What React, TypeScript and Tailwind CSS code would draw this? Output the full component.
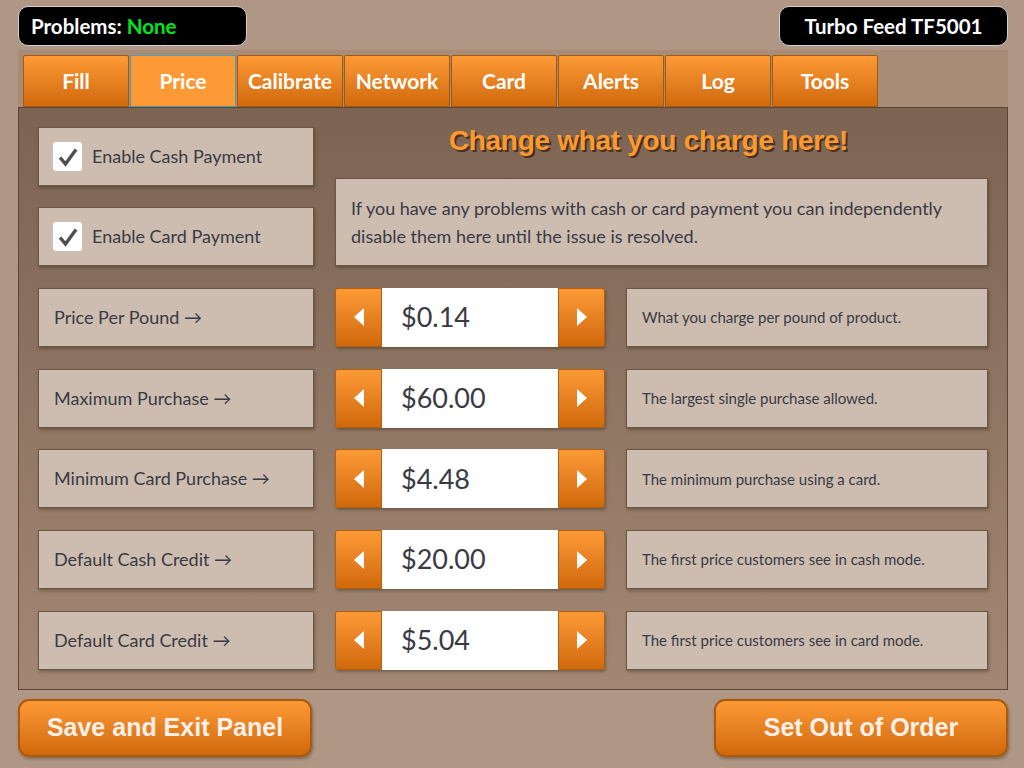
import { useState } from "react";

const tabs = ["Fill", "Price", "Calibrate", "Network", "Card", "Alerts", "Log", "Tools"];

const priceRows = [
  { label: "Price Per Pound", value: 0.14, step: 0.01, note: "What you charge per pound of product." },
  { label: "Maximum Purchase", value: 60, step: 1, note: "The largest single purchase allowed." },
  { label: "Minimum Card Purchase", value: 4.48, step: 0.01, note: "The minimum purchase using a card." },
  { label: "Default Cash Credit", value: 20, step: 1, note: "The first price customers see in cash mode." },
  { label: "Default Card Credit", value: 5.04, step: 0.01, note: "The first price customers see in card mode." },
];

const boxCls =
  "bg-[#cdbdb1] border border-[#6b5545] shadow-[1px_2px_3px_rgba(40,25,15,0.35)]";

function CheckBox({ label }: { label: string }) {
  const [on, setOn] = useState(true);
  return (
    <button
      onClick={() => setOn(!on)}
      className={`${boxCls} h-[59px] w-full flex items-center pl-[14px] gap-[10px] text-left`}
    >
      <span className="w-[29px] h-[29px] bg-white rounded-[3px] flex items-center justify-center">
        {on && (
          <svg width="22" height="22" viewBox="0 0 22 22">
            <path d="M3 11.5 L8.5 18 L19 3.5" fill="none" stroke="#505050" strokeWidth="3.4" strokeLinejoin="miter" />
          </svg>
        )}
      </span>
      <span className="text-[18px] text-[#3a3a44]">{label}</span>
    </button>
  );
}

function Stepper({ initial, step }: { initial: number; step: number }) {
  const [val, setVal] = useState(initial);
  const btn =
    "w-[47px] h-full flex items-center justify-center bg-gradient-to-b from-[#fd9a35] to-[#d06909] border border-[#b0600f]";
  return (
    <div className="flex h-[59px] w-[270px] shadow-[1px_2px_3px_rgba(40,25,15,0.35)] rounded-[3px]">
      <button onClick={() => setVal(Math.max(0, val - step))} className={`${btn} rounded-l-[3px]`}>
        <svg width="10" height="18" viewBox="0 0 10 18">
          <path d="M10 0 L0 9 L10 18 Z" fill="white" />
        </svg>
      </button>
      <div className="flex-1 bg-white flex items-center pl-[19px] text-[27px] text-[#3a3a44]">
        ${val.toFixed(2)}
      </div>
      <button onClick={() => setVal(val + step)} className={`${btn} rounded-r-[3px]`}>
        <svg width="10" height="18" viewBox="0 0 10 18">
          <path d="M0 0 L10 9 L0 18 Z" fill="white" />
        </svg>
      </button>
    </div>
  );
}

export default function App() {
  const [active, setActive] = useState("Price");

  return (
    <div className="w-[1024px] h-[768px] bg-[#b09684] font-['Lato','Open_Sans',sans-serif] flex flex-col pl-[18px] pr-[16px] pt-[6px] overflow-hidden">
      {/* Header badges */}
      <div className="flex justify-between h-[40px]">
        <div className="w-[229px] h-full bg-black rounded-[10px] border border-[#d0d0d0] flex items-center pl-[12px] text-[20.5px] font-bold text-white">
          Problems:&nbsp;<span className="text-[#00e61e]">None</span>
        </div>
        <div className="w-[229px] h-full bg-black rounded-[10px] border border-[#d0d0d0] flex items-center justify-center text-[20.5px] font-bold text-white">
          Turbo Feed TF5001
        </div>
      </div>

      {/* Tab control */}
      <div className="mt-[4px] bg-gradient-to-b from-[#a88c77] to-[#a58a75]">
        <div className="flex gap-[1px] pl-[5px] pt-[5px]">
          {tabs.map((t) => (
            <button
              key={t}
              onClick={() => setActive(t)}
              className={
                t === active
                  ? "w-[106px] h-[52px] bg-[#fd9a35] border border-[#4a9fb0] text-white text-[21px] font-bold"
                  : "w-[106px] h-[52px] bg-gradient-to-b from-[#fd9a35] to-[#d06a0a] border border-[#a05a12] rounded-t-[2px] text-white text-[21px] font-bold"
              }
            >
              {t}
            </button>
          ))}
        </div>

        {/* Panel */}
        <div className="h-[583px] border border-[#5a4535] bg-gradient-to-b from-[#7c6352] to-[#a28874] px-[19px] pt-[19px] flex flex-col gap-[21.75px]">
          <div className="flex gap-[21px]">
            <div className="w-[276px] flex flex-col gap-[21px]">
              <CheckBox label="Enable Cash Payment" />
              <CheckBox label="Enable Card Payment" />
            </div>
            <div className="flex-1 flex flex-col">
              <div className="h-[51px] flex items-start justify-center pr-[26px]">
                <h1 className="font-['Liberation_Sans',Arial,sans-serif] font-bold text-[28px] leading-[28px] text-[#fb9a2f] [text-shadow:2px_2px_0_#4a3020] tracking-[-0.3px]">
                  Change what you charge here!
                </h1>
              </div>
              <div className={`${boxCls} h-[88px] px-[15px] flex items-center text-[18px] leading-[28px] text-[#3a3a44]`}>
                If you have any problems with cash or card payment you can independently disable them here until the issue is resolved.
              </div>
            </div>
          </div>

          {priceRows.map((r) => (
            <div key={r.label} className="flex gap-[21px]">
              <div className={`${boxCls} w-[276px] h-[59px] flex items-center pl-[15px] text-[18px] text-[#3a3a44]`}>
                {r.label} →
              </div>
              <Stepper initial={r.value} step={r.step} />
              <div className={`${boxCls} flex-1 h-[59px] flex items-center pl-[15px] text-[15px] text-[#3a3a44]`}>
                {r.note}
              </div>
            </div>
          ))}
        </div>
      </div>

      {/* Footer buttons */}
      <div className="flex justify-between mt-[9px]">
        <button className="w-[294px] h-[58px] rounded-[11px] bg-gradient-to-b from-[#fd9a35] to-[#d06909] border-2 border-[#a85a10] shadow-[1px_2px_3px_rgba(40,25,15,0.35)] font-['Liberation_Sans',Arial,sans-serif] font-bold text-[25px] text-[#fff0ea]">
          Save and Exit Panel
        </button>
        <button className="w-[294px] h-[58px] rounded-[11px] bg-gradient-to-b from-[#fd9a35] to-[#d06909] border-2 border-[#a85a10] shadow-[1px_2px_3px_rgba(40,25,15,0.35)] font-['Liberation_Sans',Arial,sans-serif] font-bold text-[25px] text-[#fff0ea]">
          Set Out of Order
        </button>
      </div>
    </div>
  );
}
